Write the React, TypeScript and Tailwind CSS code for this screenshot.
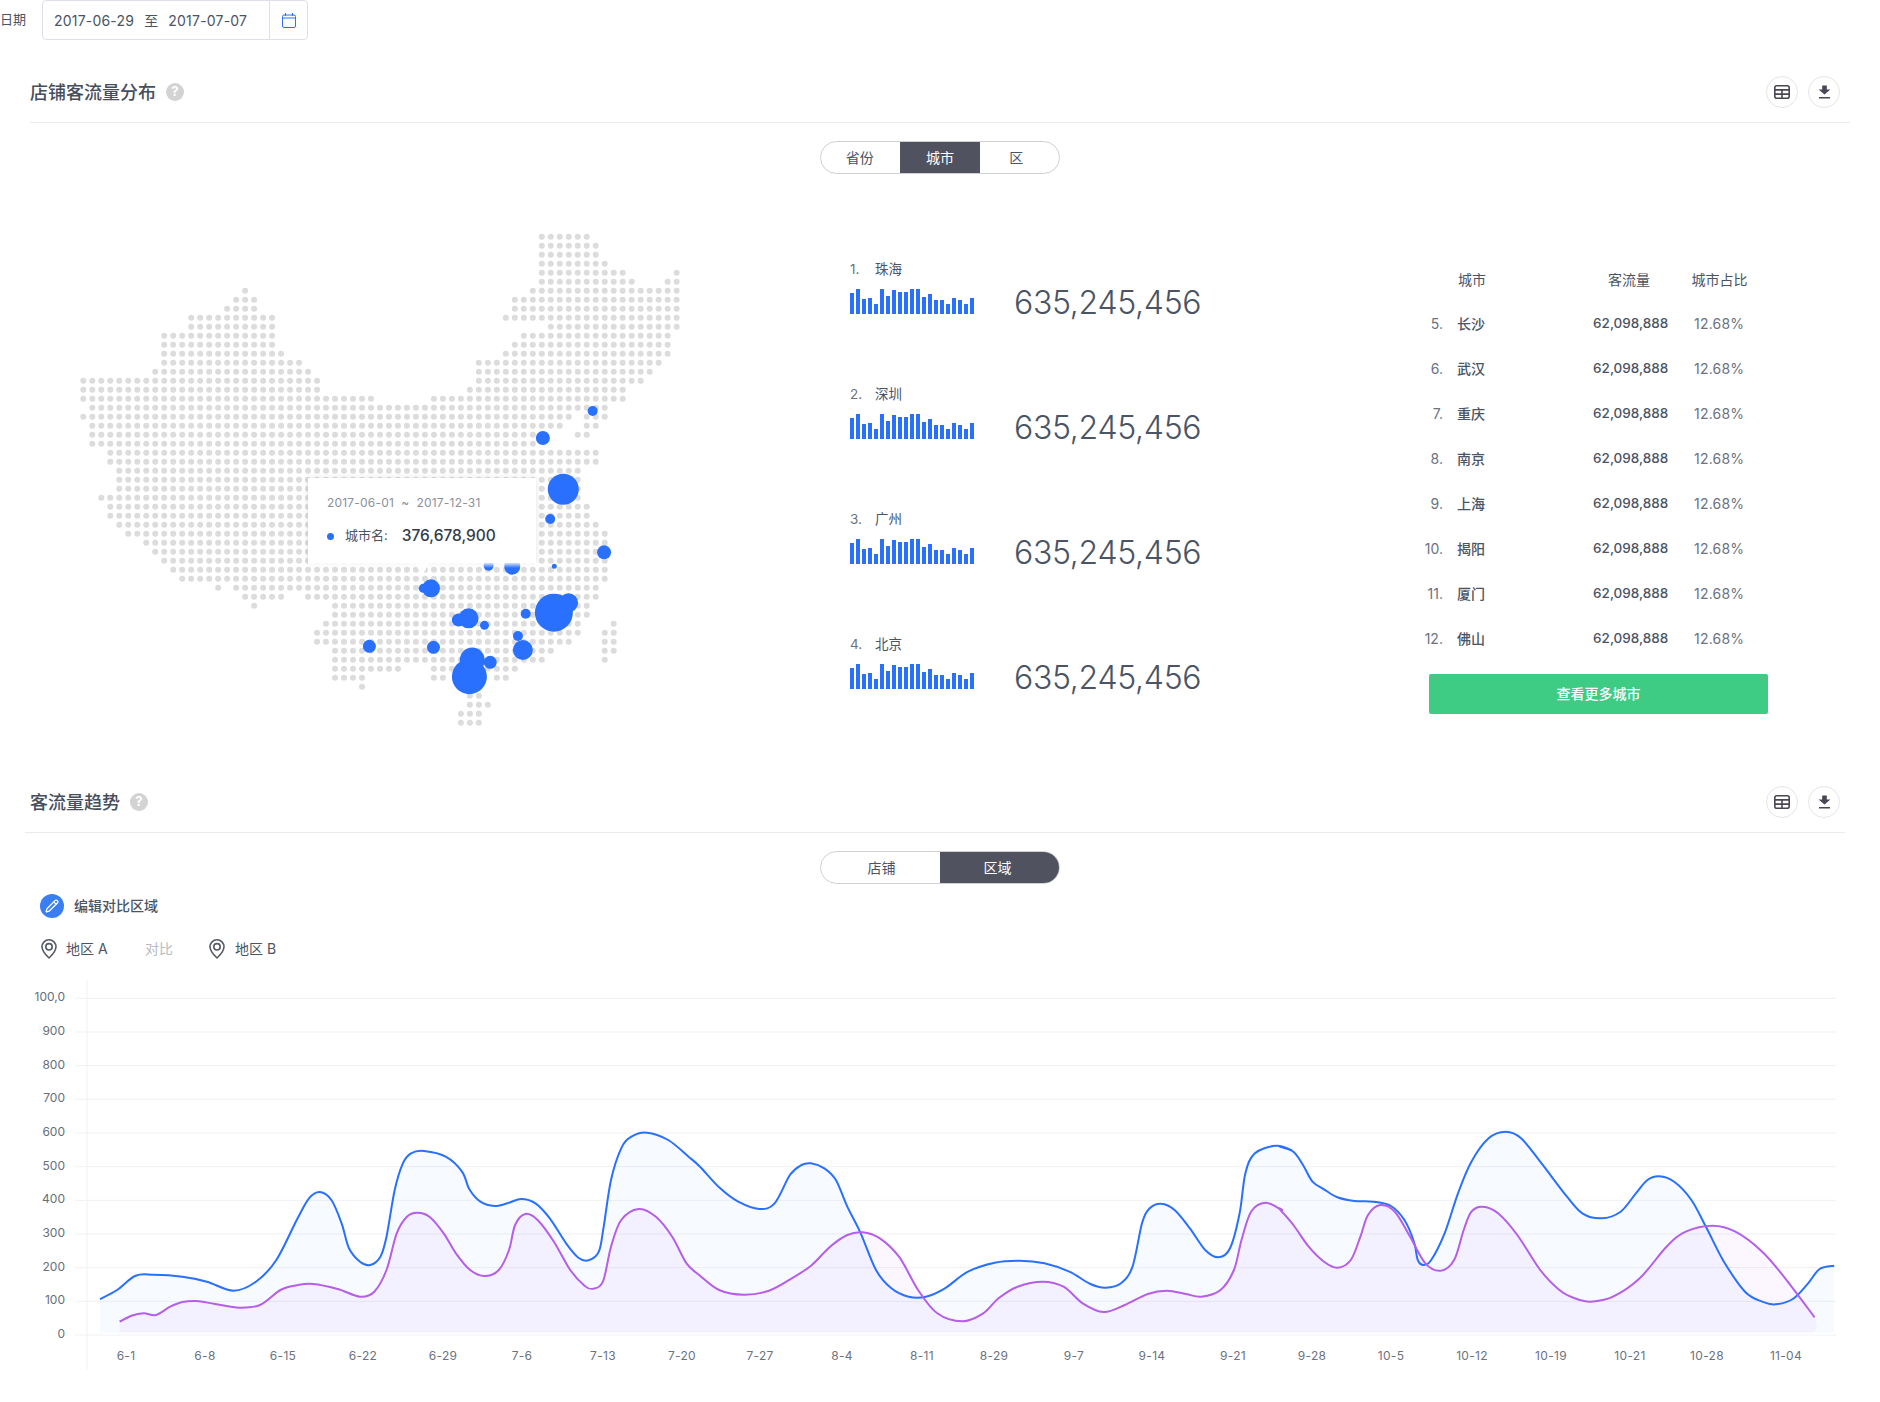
import React from 'react';
import {Pencil} from 'lucide-react';

const MAP_ROWS: number[][][] = [
    [[51, 56]], [[51, 57]], [[51, 57]], [[51, 58]], [[51, 60], [66, 66]], [[51, 61], [65, 66]],
    [[18, 18], [50, 66]], [[17, 19], [48, 66]], [[16, 19], [48, 66]], [[12, 21], [47, 66]], [[12, 21], [52, 66]],
    [[9, 21], [49, 65]], [[9, 21], [48, 65]], [[9, 22], [47, 65]], [[9, 24], [44, 64]], [[8, 25], [44, 63]],
    [[0, 26], [44, 62]], [[0, 26], [43, 60]], [[0, 32], [39, 60]], [[1, 58]], [[0, 54], [56, 58]],
    [[1, 53], [56, 57]], [[1, 50], [55, 56]], [[1, 50]], [[3, 57]], [[3, 57]], [[4, 55]], [[4, 55]], [[4, 55]],
    [[2, 55]], [[3, 56]], [[3, 56]], [[4, 57]], [[5, 58]], [[7, 58]], [[8, 58]], [[9, 58]], [[10, 58]], [[11, 58]],
    [[15, 15], [17, 57]], [[18, 22], [25, 57]], [[19, 19], [28, 56]], [[28, 56]], [[27, 55], [59, 59]],
    [[26, 55], [58, 59]], [[26, 54], [58, 59]], [[28, 52], [58, 59]], [[28, 51], [58, 58]],
    [[28, 35], [39, 48]], [[28, 31], [39, 40], [46, 47]], [[31, 31]], [[43, 44]], [[43, 45]], [[42, 44]], [[42, 44]],
];

// zoom-derived coordinates: [x, y, radius]
const MARKERS: number[][] = [
    [1305, 573, 5], [1183, 654, 7], [1233, 808, 15.5], [1201, 897, 5], [1333, 997, 7], [1211, 1039, 2.5],
    [1050, 1037, 5], [1108, 1040, 8], [909, 1105, 9], [890, 1105, 4.5], [1001, 1195, 10], [976, 1200, 6.5],
    [1040, 1216, 4.5], [1141, 1181, 5], [1210, 1178, 19], [1246, 1148, 9.5], [1122, 1248, 5], [1134, 1290, 10],
    [758, 1279, 6.5], [915, 1282, 6.5], [1010, 1320, 12.5], [1054, 1327, 6.5], [1003, 1370, 17.5],
];

const BARS = [20.7, 25, 15.3, 16.3, 10, 25, 18.3, 24, 22, 22, 25, 25, 17.3, 19.7, 14, 14, 10, 16.3, 14, 10, 16.3];
const TOP_CITIES = ['珠海', '深圳', '广州', '北京'];
const CITIES = ['长沙', '武汉', '重庆', '南京', '上海', '揭阳', '厦门', '佛山'];
const Y_LABELS = ['100,0', '900', '800', '700', '600', '500', '400', '300', '200', '100', '0'];
const X_LABELS: [string, number][] = [
    ['6-1', 126], ['6-8', 205], ['6-15', 283], ['6-22', 363], ['6-29', 443], ['7-6', 522], ['7-13', 603], ['7-20', 682],
    ['7-27', 760], ['8-4', 842], ['8-11', 922], ['8-29', 994], ['9-7', 1074], ['9-14', 1152], ['9-21', 1233],
    ['9-28', 1312], ['10-5', 1391], ['10-12', 1472], ['10-19', 1551], ['10-21', 1630], ['10-28', 1707], ['11-04', 1786],
];

const toA = (p: number[]) => [60 + p[0] / 2.45, 1100 + p[1] / 3];
const toB = (p: number[]) => [700 + p[0] / 2.613, 1100 + p[1] / 3];
const toC = (p: number[]) => [1280 + p[0] / 2.613, 1100 + p[1] / 3];

const BLUE = [
    ...[[98, 597], [140, 570], [185, 527], [230, 524], [300, 530], [360, 545], [425, 572], [480, 545], [530, 480], [580, 360], [610, 295], [637, 276], [665, 300], [690, 370], [708, 445], [735, 485], [760, 495], [785, 470], [800, 410], [820, 270], [840, 190], [860, 160], [892, 153], [945, 170], [985, 215], [1003, 268], [1030, 305], [1065, 318], [1100, 308], [1130, 297], [1165, 310], [1200, 355], [1240, 430], [1270, 473], [1295, 481], [1320, 455], [1332, 380], [1350, 240], [1375, 145], [1400, 110], [1438, 98], [1490, 120], [1540, 170]].map(toA),
    ...[[0, 200], [50, 262], [100, 305], [155, 327], [195, 310], [235, 225], [265, 195], [290, 190], [325, 205], [355, 240], [385, 320], [420, 400], [460, 510], [500, 565], [545, 590], [590, 590], [640, 565], [700, 515], [770, 488], [835, 482], [900, 490], [965, 515], [1020, 552], [1060, 563], [1100, 550], [1130, 500], [1155, 370], [1175, 325], [1205, 311], [1240, 330], [1280, 385], [1320, 450], [1355, 472], [1385, 445], [1410, 340], [1425, 220], [1450, 160], [1505, 137], [1545, 150]].map(toB),
    ...[[0, 140], [35, 155], [60, 195], [85, 245], [115, 268], [150, 292], [195, 303], [245, 305], [290, 318], [325, 360], [350, 425], [360, 480], [375, 495], [395, 480], [430, 400], [465, 280], [500, 185], [545, 115], [590, 95], [630, 115], [680, 185], [750, 290], [790, 340], [840, 355], [890, 335], [930, 280], [960, 240], [990, 229], [1030, 245], [1075, 300], [1115, 385], [1160, 485], [1215, 575], [1260, 605], [1295, 613], [1340, 597], [1380, 550], [1410, 507], [1448, 497]].map(toC),
];

const PURPLE = [
    ...[[146, 665], [175, 647], [205, 640], [235, 645], [270, 620], [300, 606], [335, 603], [380, 612], [440, 623], [490, 615], [540, 570], [580, 556], [620, 552], [680, 567], [735, 590], [770, 575], [800, 510], [825, 400], [850, 350], [875, 338], [905, 350], [940, 400], [970, 460], [1005, 510], [1040, 528], [1075, 510], [1100, 450], [1115, 375], [1140, 342], [1170, 360], [1210, 425], [1250, 510], [1285, 557], [1305, 566], [1330, 545], [1350, 440], [1375, 360], [1418, 327], [1460, 350], [1500, 410], [1535, 490]].map(toA),
    ...[[0, 527], [50, 570], [115, 584], [180, 572], [240, 535], [290, 497], [340, 440], [385, 405], [425, 397], [470, 415], [520, 470], [570, 570], [620, 640], [685, 664], [740, 640], [780, 595], [830, 560], [895, 545], [950, 560], [1000, 610], [1055, 636], [1110, 615], [1170, 582], [1220, 572], [1270, 582], [1310, 590], [1360, 570], [1395, 510], [1415, 420], [1440, 335], [1478, 308], [1520, 330]].map(toB),
    ...[[0, 328], [35, 375], [75, 440], [115, 485], [150, 503], [185, 480], [210, 410], [230, 345], [262, 315], [300, 335], [340, 410], [380, 490], [420, 512], [455, 480], [480, 390], [500, 335], [530, 320], [570, 340], [620, 405], [680, 510], [730, 570], [770, 595], [812, 605], [870, 590], [940, 535], [1010, 440], [1060, 395], [1130, 377], [1190, 395], [1260, 455], [1320, 535], [1397, 652]].map(toC),
];

const smooth = (pts: number[][]) => {
    let d = `M${pts[0][0].toFixed(1)} ${pts[0][1].toFixed(1)}`;
    for (let i = 0; i < pts.length - 1; i++) {
        const p0 = pts[Math.max(i - 1, 0)];
        const p1 = pts[i];
        const p2 = pts[i + 1];
        const p3 = pts[Math.min(i + 2, pts.length - 1)];
        const c1x = p1[0] + (p2[0] - p0[0]) / 6;
        const c1y = p1[1] + (p2[1] - p0[1]) / 6;
        const c2x = p2[0] - (p3[0] - p1[0]) / 6;
        const c2y = p2[1] - (p3[1] - p1[1]) / 6;
        d += `C${c1x.toFixed(1)} ${c1y.toFixed(1)} ${c2x.toFixed(1)} ${c2y.toFixed(1)} ${p2[0].toFixed(1)} ${p2[1].toFixed(1)}`;
    }
    return d;
};

const ChinaMap = () => (
    <svg width="640" height="520" viewBox="0 0 640 520">
        {MAP_ROWS.map((row, r) =>
            row.map(([from, to]) =>
                Array.from({length: to - from + 1}, (_, k) => (
                    <circle
                        key={`${r}-${from + k}`}
                        cx={23.3 + (from + k) * 8.99}
                        cy={16.7 + r * 9}
                        r="3"
                        fill="#dcdcdc"
                    />
                ))
            )
        )}
        {MARKERS.map(([x, y, r]) => (
            <circle key={`${x}-${y}`} cx={x / 2.45} cy={y / 3} r={r} fill="#2970ff"/>
        ))}
    </svg>
);

const HelpDot = () => (
    <span className="ml-[10px] flex h-[18px] w-[18px] items-center justify-center rounded-full bg-[#d3d3d3] text-[13px] font-bold text-white">?</span>
);

const PinIcon = () => (
    <svg width="16" height="20" viewBox="0 0 16 20" fill="none" stroke="#565a66" strokeWidth="1.6">
        <path d="M8 19C8 19 15 12.5 15 7.8A7 7 0 0 0 1 7.8C1 12.5 8 19 8 19Z" strokeLinejoin="round"/>
        <circle cx="8" cy="7.8" r="3.2"/>
    </svg>
);

const ActionButtons = () => (
    <div className="flex items-center gap-[10px]">
        <span className="flex h-8 w-8 items-center justify-center rounded-full border border-[#e6e6e6]">
            <svg width="16" height="14" viewBox="0 0 16 14" fill="none" stroke="#4a4653" strokeWidth="1.6">
                <rect x="0.8" y="0.8" width="14.4" height="12.4" rx="2"/>
                <path d="M1 4.9H15M1 9.1H15M8 4.9V13"/>
            </svg>
        </span>
        <span className="flex h-8 w-8 items-center justify-center rounded-full border border-[#e6e6e6]">
            <svg width="13" height="14" viewBox="0 0 13 14">
                <path d="M4.2 0.5H8.8V4.6H12.4L6.5 9.6L0.6 4.6H4.2Z" fill="#4a4653"/>
                <rect x="1" y="12" width="11" height="1.5" fill="#4a4653"/>
            </svg>
        </span>
    </div>
);

const SectionHeader = ({title, className}: {title: string; className: string}) => (
    <div className={`flex h-[61px] items-center justify-between border-b border-[#e9ebee] ${className}`}>
        <div className="flex items-center">
            <h2 className="text-[18px] font-medium text-[#464e5c]">{title}</h2>
            <HelpDot/>
        </div>
        <ActionButtons/>
    </div>
);

const Segment = ({items}: {items: {label: string; width: string; active?: boolean}[]}) => (
    <div className="mt-[18px] flex justify-center">
        <div className="flex h-[33px] w-[240px] overflow-hidden rounded-full border border-[#cfd0d3] text-[14px] text-[#4a5464]">
            {items.map(item => (
                <span
                    key={item.label}
                    className={`flex items-center justify-center ${item.width} ${item.active ? 'bg-[#50525f] text-white' : ''}`}
                >
                    {item.label}
                </span>
            ))}
        </div>
    </div>
);

const TrendChart = () => {
    const blue = smooth(BLUE);
    const purple = smooth(PURPLE);
    const base = 1332.7;
    return (
        <svg width="1880" height="402" viewBox="0 980 1880 402" className="mt-[19px] block">
            <path d="M87 980V1370" stroke="#f0f1f3" strokeWidth="1"/>
            {Y_LABELS.map((label, i) => {
                const y = 998.3 + i * 33.67;
                return (
                    <g key={label}>
                        <path d={`M75 ${y}H1836`} stroke="#f0f1f3" strokeWidth="1"/>
                        <text x="65" y={y + 3} textAnchor="end" fontSize="12" fill="#666e7a">{label}</text>
                    </g>
                );
            })}
            <path d={`${blue}L1834 ${base}L100 ${base}Z`} fill="#2970ff" fillOpacity="0.035"/>
            <path d={`${purple}L1817 ${base - 8}Q1817 ${base} 1809 ${base}L119.6 ${base}Z`} fill="#a855f7" fillOpacity="0.05"/>
            <path d={blue} fill="none" stroke="#2970ff" strokeWidth="2"/>
            <path d={purple} fill="none" stroke="#b55ee8" strokeWidth="2"/>
            {X_LABELS.map(([label, x]) => (
                <text key={label} x={x} y="1360" textAnchor="middle" fontSize="12" letterSpacing="0.3" fill="#6b7280">{label}</text>
            ))}
        </svg>
    );
};

export default function App() {
    return (
        <div className="h-[1402px] w-[1880px] overflow-hidden bg-white font-['Inter','Noto_Sans_CJK_SC',sans-serif] text-[#4a5464]">
            <div className="flex h-10 items-center">
                <span className="w-[42px] text-[13px]">日期</span>
                <div className="flex h-10 w-[266px] items-center rounded-[4px] border border-[#dde1e7] text-[14px] tracking-[0.2px]">
                    <span className="flex w-[226px] gap-[10px] whitespace-nowrap pl-[11px]">
                        <span>2017-06-29</span><span>至</span><span>2017-07-07</span>
                    </span>
                    <span className="flex h-full flex-1 items-center justify-center border-l border-[#dde1e7]">
                        <svg width="14" height="15" viewBox="0 0 14 15" fill="none" stroke="#2970ff" strokeWidth="1">
                            <rect x="0.5" y="2" width="13" height="12.5" rx="1.5"/>
                            <path d="M0.5 5H13.5M3.5 0V3M10.5 0V3"/>
                        </svg>
                    </span>
                </div>
            </div>

            <SectionHeader title="店铺客流量分布" className="ml-[30px] mr-[30px] mt-[22px] pr-[10px]"/>
            <Segment items={[
                {label: '省份', width: 'w-[80px] pr-[2px]'},
                {label: '城市', width: 'w-[80px]', active: true},
                {label: '区', width: 'w-[80px] pr-[6px]'},
            ]}/>

            <div className="ml-[60px] mt-[46px] flex h-[552px]">
                <div className="relative h-[520px] w-[640px]">
                    <ChinaMap/>
                    <div className="absolute left-[248px] top-[258px] h-[85px] w-[228px] bg-white pl-[19px] pt-[17px] shadow-[0_0_6px_rgba(0,0,0,0.12)]">
                        <div className="whitespace-nowrap text-[12px] leading-4 tracking-[0.2px] text-[#8b909a]">2017-06-01&nbsp; ~ &nbsp;2017-12-31</div>
                        <div className="mt-[15px] flex h-5 items-center">
                            <span className="h-[7px] w-[7px] rounded-full bg-[#2970ff]"/>
                            <span className="ml-[11px] text-[13px]">城市名:</span>
                            <span className="ml-[14px] text-[15.5px] font-medium text-[#333c4a]">376,678,900</span>
                        </div>
                    </div>
                    <div className="absolute left-[248px] top-[343px] h-[5px] w-[228px] bg-gradient-to-b from-white/80 to-transparent"/>
                    <div className="absolute left-[355px] top-[343px] h-0 w-0 border-x-[7px] border-t-[13px] border-x-transparent border-t-white"/>
                </div>

                <div className="ml-[150px] w-[569px] pt-[39px]">
                    {TOP_CITIES.map((city, i) => (
                        <div key={city} className="flex h-[125px]">
                            <div className="w-[164px]">
                                <div className="flex h-5 items-center text-[13.5px]">
                                    <span className="w-[25px] text-[#6b7280]">{i + 1}.</span>
                                    <span>{city}</span>
                                </div>
                                <div className="mt-[10px] flex h-[25px] items-end gap-[2px]">
                                    {BARS.map((h, k) => (
                                        <span key={k} className="w-1 bg-[#2970ff]" style={{height: h}}/>
                                    ))}
                                </div>
                            </div>
                            <div className="mt-[24px] text-[32px] font-light leading-10 tracking-[-0.3px] text-[#4a5464]">635,245,456</div>
                        </div>
                    ))}
                </div>

                <div className="w-[351px] pt-[36px] text-[14px]">
                    <div className="flex h-[45px] items-center pt-[1px] text-[14px]">
                        <span className="ml-[39px] w-[99px]">城市</span>
                        <span className="w-[112px] pr-[19px] text-right">客流量</span>
                        <span className="w-[101px] text-center">城市占比</span>
                    </div>
                    {CITIES.map((city, i) => (
                        <div key={city} className="flex h-[45px] items-center">
                            <span className="w-6 text-right text-[#6b7280]">{i + 5}.</span>
                            <span className="ml-[14px] w-[100px] font-medium">{city}</span>
                            <span className="w-[112px] text-right text-[13.5px] font-medium">62,098,888</span>
                            <span className="w-[102px] text-center tracking-[0.2px] text-[#6b7280]">12.68%</span>
                        </div>
                    ))}
                    <button className="ml-[10px] mt-[13px] h-[40px] w-[339px] rounded-[2px] bg-[#3ecb83] pb-[2px] text-[14px] font-medium text-white">
                        查看更多城市
                    </button>
                </div>
            </div>

            <SectionHeader title="客流量趋势" className="ml-[25px] mr-[35px] pl-[5px] pr-[5px]"/>
            <Segment items={[
                {label: '店铺', width: 'w-[120px] pl-[2px]'},
                {label: '区域', width: 'w-[120px] pr-[4px]', active: true},
            ]}/>

            <div className="ml-10 mt-[10px] flex h-6 items-center">
                <span className="flex h-6 w-6 items-center justify-center rounded-full bg-[#3a7ff2]">
                    <Pencil size={14} color="#fff" strokeWidth={2.2}/>
                </span>
                <span className="ml-[10px] -mt-[2px] text-[14px] font-medium">编辑对比区域</span>
            </div>
            <div className="ml-[41px] mt-[19px] flex h-6 items-center text-[14px]">
                <PinIcon/>
                <span className="-mt-[2px] ml-[9px] w-[79px]">地区 A</span>
                <span className="-mt-[2px] w-[64px] text-[#b8bbc0]">对比</span>
                <PinIcon/>
                <span className="-mt-[2px] ml-[10px]">地区 B</span>
            </div>
            <TrendChart/>
        </div>
    );
}
